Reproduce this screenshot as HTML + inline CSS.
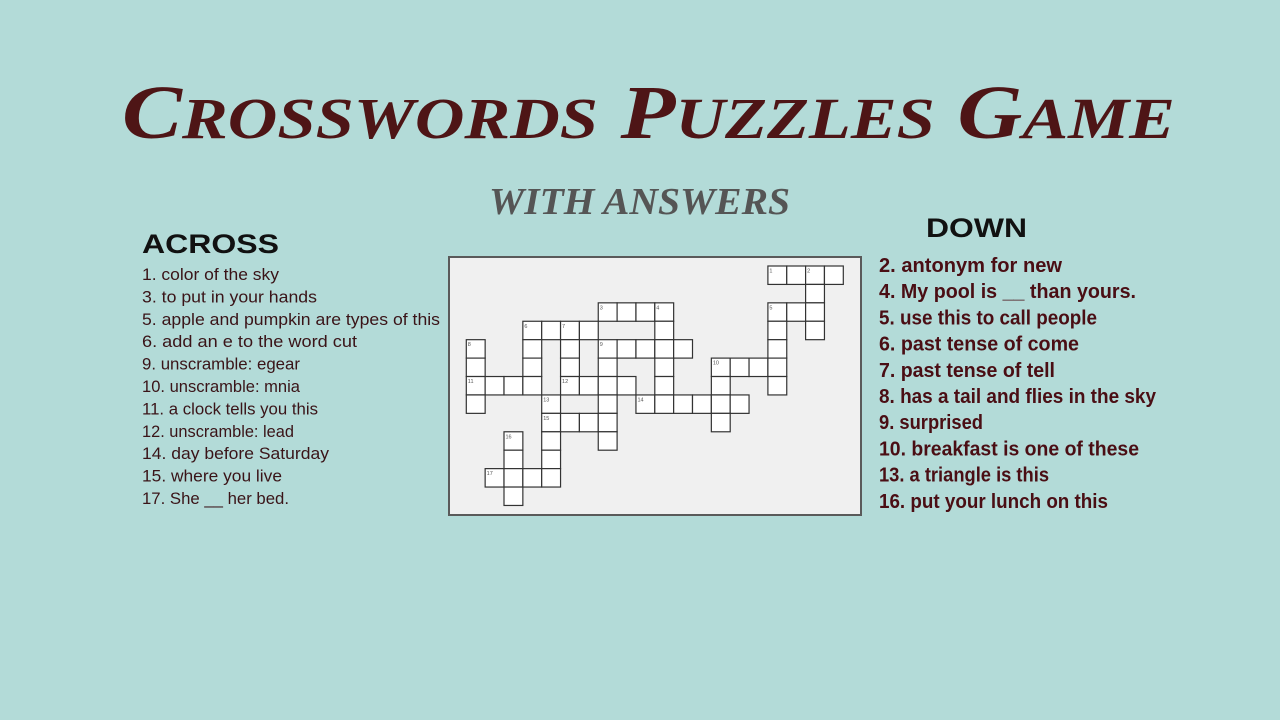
<!DOCTYPE html>
<html><head><meta charset="utf-8"><style>
html,body{margin:0;padding:0;background:#b3dbd8;}
svg{display:block}
</style></head><body>
<svg width="1280" height="720" viewBox="0 0 1280 720" xmlns="http://www.w3.org/2000/svg">
<rect width="1280" height="720" fill="#b3dbd8"/>
<text x="122" y="138" textLength="1053" lengthAdjust="spacingAndGlyphs" font-family="Liberation Serif, serif" font-weight="bold" font-style="italic" fill="#4e1516" font-size="76">C<tspan font-size="58">ROSSWORDS</tspan> P<tspan font-size="58">UZZLES</tspan> G<tspan font-size="58">AME</tspan></text>
<text x="489" y="214" textLength="301" lengthAdjust="spacingAndGlyphs" font-family="Liberation Serif, serif" font-weight="bold" font-style="italic" fill="#555555" font-size="38">WITH ANSWERS</text>
<text x="142" y="253" textLength="137" lengthAdjust="spacingAndGlyphs" font-family="Liberation Sans, sans-serif" font-weight="bold" fill="#111" font-size="27">ACROSS</text>
<text x="926" y="237" textLength="101" lengthAdjust="spacingAndGlyphs" font-family="Liberation Sans, sans-serif" font-weight="bold" fill="#111" font-size="27">DOWN</text>
<g font-family="Liberation Sans, sans-serif" fill="#3a1418" font-size="17">
<text x="142" y="280" textLength="137" lengthAdjust="spacingAndGlyphs">1. color of the sky</text>
<text x="142" y="302.4" textLength="175" lengthAdjust="spacingAndGlyphs">3. to put in your hands</text>
<text x="142" y="324.8" textLength="298" lengthAdjust="spacingAndGlyphs">5. apple and pumpkin are types of this</text>
<text x="142" y="347.2" textLength="215" lengthAdjust="spacingAndGlyphs">6. add an e to the word cut</text>
<text x="142" y="369.6" textLength="158" lengthAdjust="spacingAndGlyphs">9. unscramble: egear</text>
<text x="142" y="392" textLength="158" lengthAdjust="spacingAndGlyphs">10. unscramble: mnia</text>
<text x="142" y="414.4" textLength="176" lengthAdjust="spacingAndGlyphs">11. a clock tells you this</text>
<text x="142" y="436.8" textLength="152" lengthAdjust="spacingAndGlyphs">12. unscramble: lead</text>
<text x="142" y="459.2" textLength="187" lengthAdjust="spacingAndGlyphs">14. day before Saturday</text>
<text x="142" y="481.6" textLength="140" lengthAdjust="spacingAndGlyphs">15. where you live</text>
<text x="142" y="504" textLength="147" lengthAdjust="spacingAndGlyphs">17. She __ her bed.</text>
</g>
<g font-family="Liberation Sans, sans-serif" fill="#4a0e14" font-weight="bold" font-size="20">
<text x="879" y="272" textLength="183" lengthAdjust="spacingAndGlyphs">2. antonym for new</text>
<text x="879" y="298.2" textLength="257" lengthAdjust="spacingAndGlyphs">4. My pool is __ than yours.</text>
<text x="879" y="324.4" textLength="218" lengthAdjust="spacingAndGlyphs">5. use this to call people</text>
<text x="879" y="350.6" textLength="200" lengthAdjust="spacingAndGlyphs">6. past tense of come</text>
<text x="879" y="376.8" textLength="176" lengthAdjust="spacingAndGlyphs">7. past tense of tell</text>
<text x="879" y="403" textLength="277" lengthAdjust="spacingAndGlyphs">8. has a tail and flies in the sky</text>
<text x="879" y="429.2" textLength="104" lengthAdjust="spacingAndGlyphs">9. surprised</text>
<text x="879" y="455.4" textLength="260" lengthAdjust="spacingAndGlyphs">10. breakfast is one of these</text>
<text x="879" y="481.6" textLength="170" lengthAdjust="spacingAndGlyphs">13. a triangle is this</text>
<text x="879" y="507.8" textLength="229" lengthAdjust="spacingAndGlyphs">16. put your lunch on this</text>
</g>
<rect x="449" y="257" width="412" height="258" fill="#f0f0f0" stroke="#5a5a5a" stroke-width="2"/>
<g id="grid" fill="#fff" stroke="#333" stroke-width="1.2"></g>
<g id="nums" font-family="Liberation Sans, sans-serif" font-size="5.5" fill="#555"></g>
<script>
var cells={0:[16,17,18,19],1:[18],2:[7,8,9,10,16,17,18],3:[3,4,5,6,10,16,18],4:[0,3,5,7,8,9,10,11,16],5:[0,3,5,7,10,13,14,15,16],6:[0,1,2,3,5,6,7,8,10,13,16],7:[0,4,7,9,10,11,12,13,14],8:[4,5,6,7,13],9:[2,4,7],10:[2,4],11:[1,2,3,4],12:[2]};
var nums=[[0,16,1],[0,18,2],[2,7,3],[2,10,4],[2,16,5],[3,3,6],[3,5,7],[4,0,8],[4,7,9],[5,13,10],[6,0,11],[6,5,12],[7,4,13],[7,9,14],[8,4,15],[9,2,16],[11,1,17]];
var W=18.85,H=18.42,X0=466.3,Y0=266,ns="http://www.w3.org/2000/svg";
var g=document.getElementById('grid'),n=document.getElementById('nums');
for(var r in cells){cells[r].forEach(function(c){var e=document.createElementNS(ns,'rect');e.setAttribute('x',X0+c*W);e.setAttribute('y',Y0+r*H);e.setAttribute('width',W);e.setAttribute('height',H);g.appendChild(e);});}
nums.forEach(function(a){var t=document.createElementNS(ns,'text');t.setAttribute('x',X0+a[1]*W+1.5);t.setAttribute('y',Y0+a[0]*H+6.5);t.textContent=a[2];n.appendChild(t);});
</script>
</svg>
</body></html>
